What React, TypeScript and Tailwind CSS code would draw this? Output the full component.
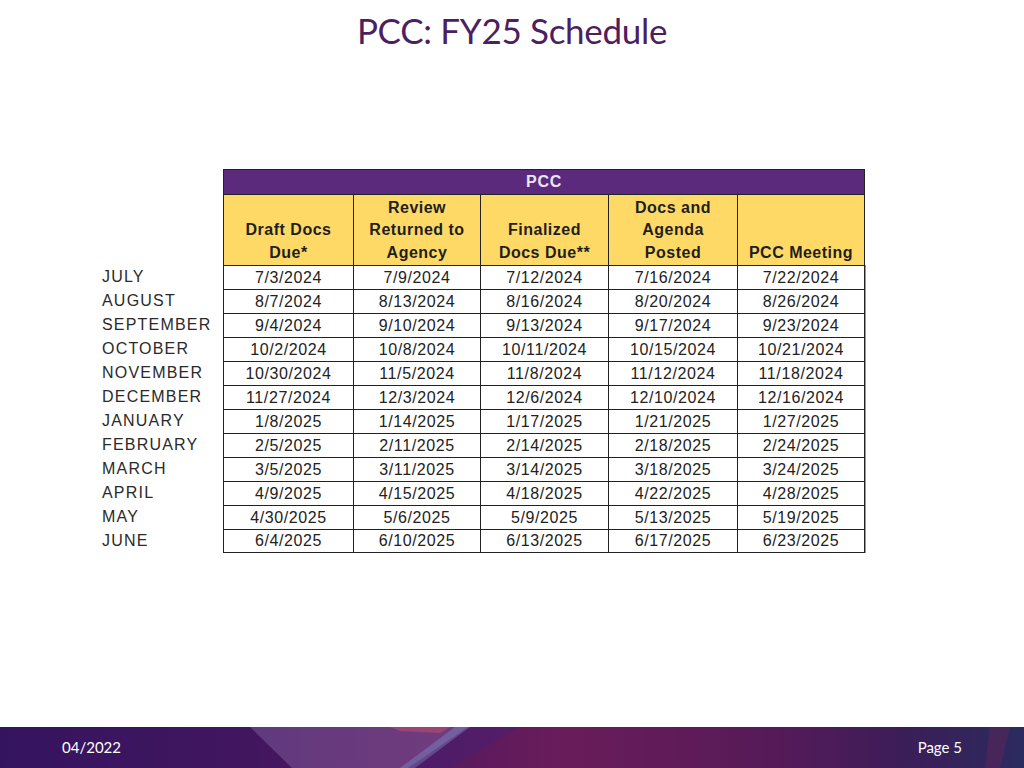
import React from "react";

const rows: [string, string, string, string, string, string][] = [
  ["JULY", "7/3/2024", "7/9/2024", "7/12/2024", "7/16/2024", "7/22/2024"],
  ["AUGUST", "8/7/2024", "8/13/2024", "8/16/2024", "8/20/2024", "8/26/2024"],
  ["SEPTEMBER", "9/4/2024", "9/10/2024", "9/13/2024", "9/17/2024", "9/23/2024"],
  ["OCTOBER", "10/2/2024", "10/8/2024", "10/11/2024", "10/15/2024", "10/21/2024"],
  ["NOVEMBER", "10/30/2024", "11/5/2024", "11/8/2024", "11/12/2024", "11/18/2024"],
  ["DECEMBER", "11/27/2024", "12/3/2024", "12/6/2024", "12/10/2024", "12/16/2024"],
  ["JANUARY", "1/8/2025", "1/14/2025", "1/17/2025", "1/21/2025", "1/27/2025"],
  ["FEBRUARY", "2/5/2025", "2/11/2025", "2/14/2025", "2/18/2025", "2/24/2025"],
  ["MARCH", "3/5/2025", "3/11/2025", "3/14/2025", "3/18/2025", "3/24/2025"],
  ["APRIL", "4/9/2025", "4/15/2025", "4/18/2025", "4/22/2025", "4/28/2025"],
  ["MAY", "4/30/2025", "5/6/2025", "5/9/2025", "5/13/2025", "5/19/2025"],
  ["JUNE", "6/4/2025", "6/10/2025", "6/13/2025", "6/17/2025", "6/23/2025"],
];

const heads: string[][] = [
  ["Draft Docs", "Due*"],
  ["Review", "Returned to", "Agency"],
  ["Finalized", "Docs Due**"],
  ["Docs and", "Agenda", "Posted"],
  ["PCC Meeting"],
];

const grid = "grid grid-cols-[121px_130px_127px_128px_129px_128px]";

export default function App() {
  return (
    <div className="w-[1024px] h-[768px] bg-white flex flex-col overflow-hidden">
      <div className="h-[60px] flex items-center justify-center pt-[1px]">
        <h1 className="text-[#4d1f60] text-[35px] leading-none tracking-[-0.3px]" style={{ fontFamily: "Lato, 'Open Sans', sans-serif" }}>
          PCC: FY25 Schedule
        </h1>
      </div>

      <div className="flex-1 pt-[109px] pl-[102px]" style={{ fontFamily: "'Liberation Sans', Arial, sans-serif" }}>
        <div className={grid}>
          <div />
          <div className="col-span-5 h-[25px] bg-[#5b2a7d] border-[1.5px] border-b-0 border-[#222] flex items-center justify-center text-[#ece4f2] font-bold text-[16px] tracking-[0.8px]">
            PCC
          </div>
        </div>
        <div className={grid}>
          <div />
          {heads.map((h, i) => (
            <div
              key={i}
              className={`h-[71px] bg-[#ffd966] border-t-[1.5px] border-[#222] ${i === 0 ? "border-l-[1.5px]" : "border-l"} ${i === 4 ? "border-r-[1.5px]" : ""} flex flex-col justify-end items-center pb-[1px] text-[#1e1e1e] font-bold text-[16px] leading-[22.5px] tracking-[0.5px]`}
            >
              {h.map((t, j) => (
                <span key={j}>{t}</span>
              ))}
            </div>
          ))}
        </div>
        {rows.map((r, ri) => (
          <div key={ri} className={grid}>
            <div className="h-[24px] flex items-center text-[16px] text-[#2a2a2a] tracking-[1.2px]">{r[0]}</div>
            {r.slice(1).map((c, ci) => (
              <div
                key={ci}
                className={`h-[24px] border-t-[1.5px] border-[#222] ${ci === 0 ? "border-l-[1.5px]" : "border-l"} ${ci === 4 ? "border-r-[1.5px] shadow-[1px_0_0_#999]" : ""} ${ri === rows.length - 1 ? "border-b-[1.5px]" : ""} flex items-center justify-center text-[16px] text-[#222] tracking-[0.6px]`}
              >
                {c}
              </div>
            ))}
          </div>
        ))}
      </div>

      <div className="relative h-[41px] bg-[linear-gradient(90deg,#35145f_0%,#42165f_25%,#5a1a5e_45%,#6a1c5a_55%,#571a58_75%,#3c1d58_88%,#2b2b5f_100%)]">
        <svg className="absolute inset-0" width="1024" height="41" viewBox="0 0 1024 41">
          <polygon points="250,0 468,0 408,41 292,41" fill="#a88cc6" opacity="0.3" />
          <polygon points="390,0 450,0 440,6 400,4" fill="#d4506a" opacity="0.45" />
          <polygon points="455,0 470,0 415,41 400,41" fill="#7aa0e0" opacity="0.35" />
          <polygon points="470,0 520,0 450,41 415,41" fill="#3a2080" opacity="0.3" />
          <polygon points="990,0 1010,0 1000,41 985,41" fill="#b02050" opacity="0.2" />
        </svg>
        <div className="relative h-full flex items-center justify-between pl-[62px] pr-[62px] text-white text-[15px]" style={{ fontFamily: "Lato, 'Open Sans', sans-serif" }}>
          <span>04/2022</span>
          <span>Page 5</span>
        </div>
      </div>
    </div>
  );
}
